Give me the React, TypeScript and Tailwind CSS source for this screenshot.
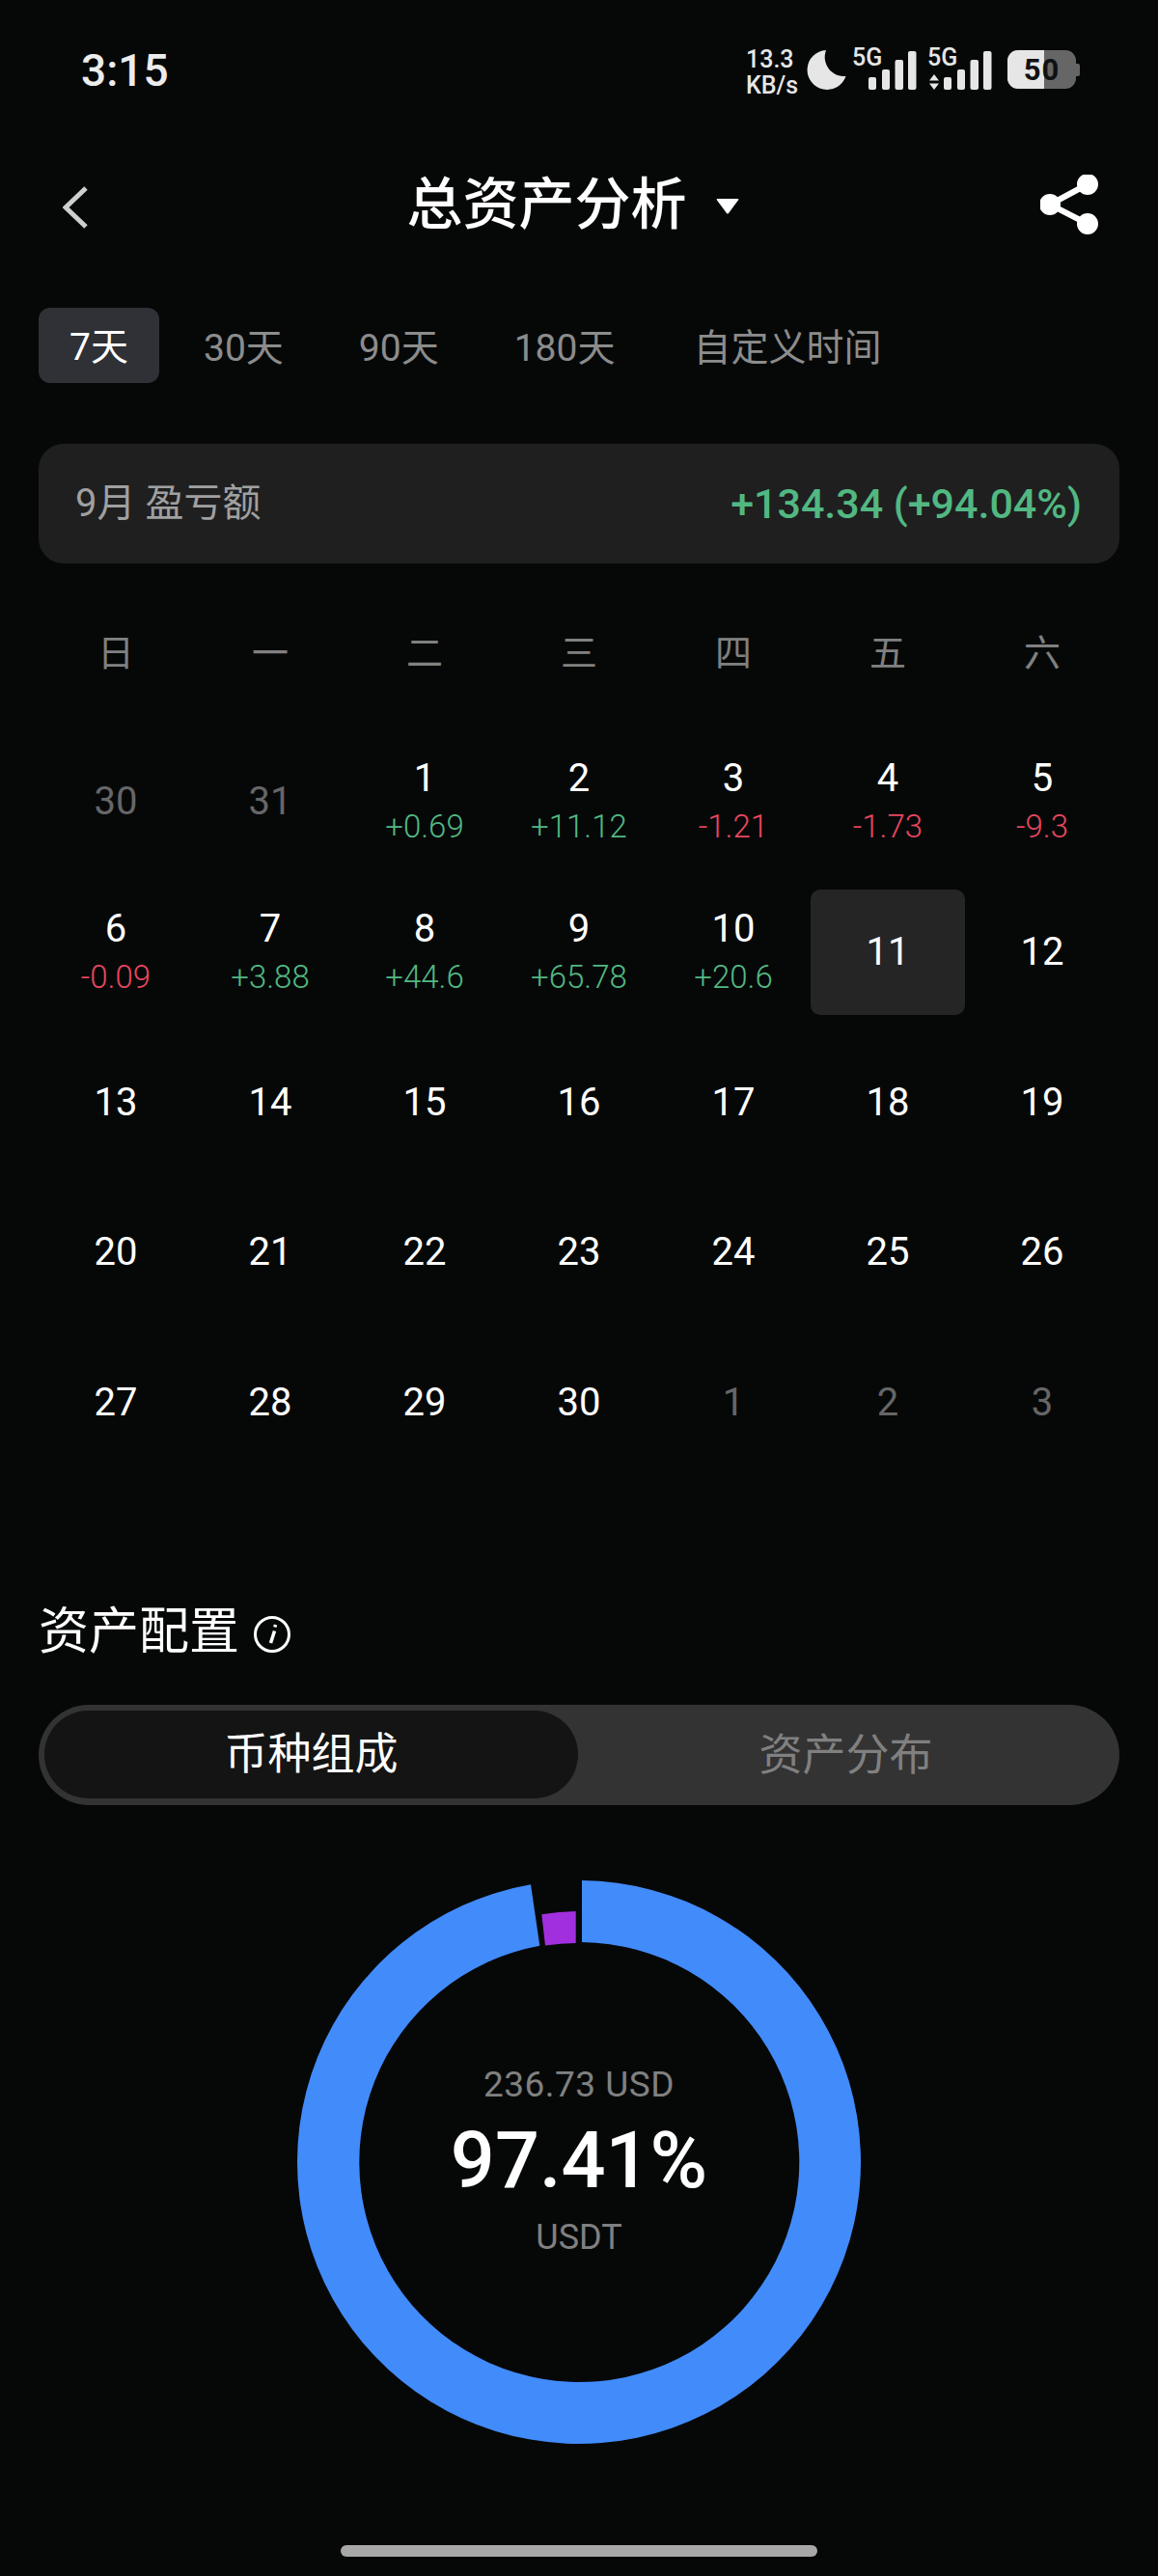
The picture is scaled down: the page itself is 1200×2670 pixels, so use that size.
const days: { n: number; v?: string; muted?: boolean; up?: boolean; selected?: boolean }[] = [
  { n: 30, muted: true },
  { n: 31, muted: true },
  { n: 1, v: "+0.69", up: true },
  { n: 2, v: "+11.12", up: true },
  { n: 3, v: "-1.21" },
  { n: 4, v: "-1.73" },
  { n: 5, v: "-9.3" },
  { n: 6, v: "-0.09" },
  { n: 7, v: "+3.88", up: true },
  { n: 8, v: "+44.6", up: true },
  { n: 9, v: "+65.78", up: true },
  { n: 10, v: "+20.6", up: true },
  { n: 11, selected: true },
  { n: 12 },
  ...Array.from({ length: 18 }, (_, i) => ({ n: 13 + i })),
  { n: 1, muted: true },
  { n: 2, muted: true },
  { n: 3, muted: true },
];

const weekdays = ["日", "一", "二", "三", "四", "五", "六"];
const tabs = ["30天", "90天", "180天"];

// signal bars, shared by both SIMs
const SignalBars = () => (
  <svg width="50" height="40" viewBox="0 0 50 40" fill="#e6e6e6">
    <rect x="0" y="27" width="8" height="13" rx="2" />
    <rect x="14" y="19" width="8" height="21" rx="2" />
    <rect x="27.500" y="9" width="8.500" height="31" rx="2" />
    <rect x="41" y="0" width="8.500" height="40" rx="2" />
  </svg>
);

const StatusBar = () => (
  <div className="flex h-[93px] items-start justify-between pt-[48px] pr-[81px] pl-[84px]">
    <span className="text-[46px] leading-[50px] font-medium text-[#ececec]">3:15</span>
    <div className="flex items-start">
      <div className="flex w-[54px] flex-col text-[25px] leading-[27px] font-medium text-[#e6e6e6]">
        <span>13.3</span>
        <span>KB/s</span>
      </div>
      <svg className="mt-[4px] ml-[9px]" width="41" height="41" viewBox="0 0 41 41" fill="#e6e6e6">
        <path d="M20 0 A20.500 20.500 0 1 0 40.500 27 A20 20 0 0 1 20 0 Z" />
      </svg>
      <div className="relative ml-[6px] h-[45px] w-[67px]">
        <span className="absolute top-[-2px] left-0 text-[25px] leading-[27px] font-medium text-[#e6e6e6]">5G</span>
        <div className="absolute top-[5px] left-[17px]">
          <SignalBars />
        </div>
      </div>
      <div className="relative ml-[11px] h-[45px] w-[67px]">
        <span className="absolute top-[-2px] left-0 text-[25px] leading-[27px] font-medium text-[#e6e6e6]">5G</span>
        <svg className="absolute top-[29px] left-[2px]" width="10" height="16" viewBox="0 0 10 16" fill="#e6e6e6">
          <path d="M5 0 L10 6.500 H0 Z M0 9.500 H10 L5 16 Z" />
        </svg>
        <div className="absolute top-[5px] left-[17px]">
          <SignalBars />
        </div>
      </div>
      <div className="relative mt-[4px] ml-[16px] flex h-[40px] w-[71px] items-center justify-center overflow-hidden rounded-[11px] bg-[#666666]">
        <div className="absolute top-0 bottom-0 left-0 w-[38px] bg-[#e6e6e6]" />
        <span className="relative text-[31px] leading-none font-bold tracking-[1px] text-[#111111]">50</span>
      </div>
      <div className="mt-[18px] h-[13px] w-[4px] rounded-r-[2px] bg-[#666666]" />
    </div>
  </div>
);

const Header = () => (
  <div className="mt-[52px] flex h-[134px] items-center justify-between pr-[62px] pl-[65px]">
    <svg className="mt-[6px]" width="26" height="44" viewBox="0 0 26 44" fill="none" stroke="#cfcfcf" strokeWidth="5">
      <path d="M24 2 L3 22 L24 42" />
    </svg>
    <div className="ml-[18px] flex items-center">
      <span className="text-[58px] leading-none font-medium text-white">总资产分析</span>
      <svg className="mt-[4px] ml-[30px]" width="24" height="16" viewBox="0 0 24 16" fill="white">
        <path d="M1.500 0 H22.500 Q24 0 23 1.500 L13 15 Q12 16 11 15 L1 1.500 Q0 0 1.500 0 Z" />
      </svg>
    </div>
    <svg width="60" height="62" viewBox="0 0 60 62" fill="white" stroke="white" strokeWidth="6">
      <path d="M49 10 L10 31 L49 51" fill="none" />
      <circle cx="49" cy="10" r="8" />
      <circle cx="10" cy="31" r="8" />
      <circle cx="49" cy="51" r="8" />
    </svg>
  </div>
);

const DayCell = ({ n, v, muted, up, selected }: (typeof days)[number]) => (
  <div
    className={`flex h-[130px] flex-col items-center justify-center rounded-[10px] ${selected ? "bg-[#252525]" : ""} ${v ? "pb-[3px]" : ""}`}
  >
    <span className={`text-[40px] leading-[46px] ${muted ? "text-[#666666]" : "text-white"}`}>{n}</span>
    {v && (
      <span className={`mt-[9px] text-[33px] leading-[36px] font-light ${up ? "text-[#52b882]" : "text-[#e8475f]"}`}>
        {v}
      </span>
    )}
  </div>
);

const Donut = () => (
  <div className="relative mx-auto mt-[70px] h-[600px] w-[600px]">
    <svg width="600" height="600" viewBox="0 0 600 600">
      <path d="M303 8 A292 292 0 1 1 250 12.300 L259.300 75.700 A228 228 0 1 0 303 72 Z" fill="#428bfb" />
      <path d="M261.300 43.300 A260 260 0 0 1 296.700 40 L296.700 73 A227 227 0 0 0 265 75.500 Z" fill="#a22fde" />
    </svg>
    <div className="absolute inset-0 flex flex-col items-center justify-center pb-[3px]">
      <span className="text-[37px] leading-[44px] tracking-[0.5px] text-[#808080]">236.73 USD</span>
      <span className="mt-[10px] text-[81px] leading-[94px] font-medium text-white">97.41%</span>
      <span className="mt-[10px] text-[36px] leading-[44px] text-[#808080]">USDT</span>
    </div>
  </div>
);

export default function App() {
  return (
    <div className="flex h-[2670px] w-[1200px] flex-col overflow-hidden bg-[#060808] font-['Roboto','Noto_Sans_CJK_SC',sans-serif]">
      <StatusBar />
      <Header />

      {/* range tabs */}
      <div className="mt-[40px] flex items-center gap-[22px] pl-[40px] text-[39px] leading-none text-[#8c8c8c]">
        <div className="-mr-[4px] flex h-[78px] w-[125px] items-center justify-center rounded-[12px] bg-[#2f3136] pt-[5px] text-white">
          7天
        </div>
        {tabs.map((t) => (
          <div key={t} className="px-[28px] pt-[7px]">
            {t}
          </div>
        ))}
        <div className="ml-[3px] px-[28px] pt-[7px]">自定义时间</div>
      </div>

      {/* monthly pnl */}
      <div className="mx-[40px] mt-[63px] flex h-[124px] items-center justify-between rounded-[26px] bg-[#1f1f20] pr-[39px] pl-[38px]">
        <span className="text-[40px] leading-none text-[#a0a0a0]">9月 盈亏额</span>
        <span className="text-[43px] leading-none font-medium text-[#52b882]">+134.34 (+94.04%)</span>
      </div>

      {/* calendar */}
      <div className="mx-[40px] mt-[70px] grid grid-cols-7 text-center text-[38px] leading-[46px] text-[#808080]">
        {weekdays.map((d) => (
          <div key={d}>{d}</div>
        ))}
      </div>
      <div className="mx-[40px] mt-[66px] grid grid-cols-7 gap-y-[25.750px] text-center">
        {days.map((d, i) => (
          <DayCell key={i} {...d} />
        ))}
      </div>

      {/* allocation */}
      <div className="mt-[142px] flex items-center pl-[40px]">
        <span className="text-[52px] leading-[62px] text-white">资产配置</span>
        <svg className="mt-[4px] ml-[15px]" width="38" height="38" viewBox="0 0 38 38" fill="none" stroke="white">
          <circle cx="19" cy="19" r="17.500" strokeWidth="3" />
          <path d="M21.500 15.500 L17.500 28" strokeWidth="3.500" />
          <path d="M22.500 9 L21.800 11.500" strokeWidth="3.500" />
        </svg>
      </div>
      <div className="mx-[40px] mt-[44px] flex h-[104px] rounded-full bg-[#333333] p-[6px] text-[45px] leading-none">
        <div className="flex h-[91px] w-[553px] items-center justify-center rounded-full bg-[#141414] text-white">
          币种组成
        </div>
        <div className="flex flex-1 items-center justify-center text-[#808080]">资产分布</div>
      </div>

      <Donut />

      <div className="mx-auto mt-[97px] h-[12px] w-[494px] rounded-full bg-[#a8a8a8]" />
    </div>
  );
}
